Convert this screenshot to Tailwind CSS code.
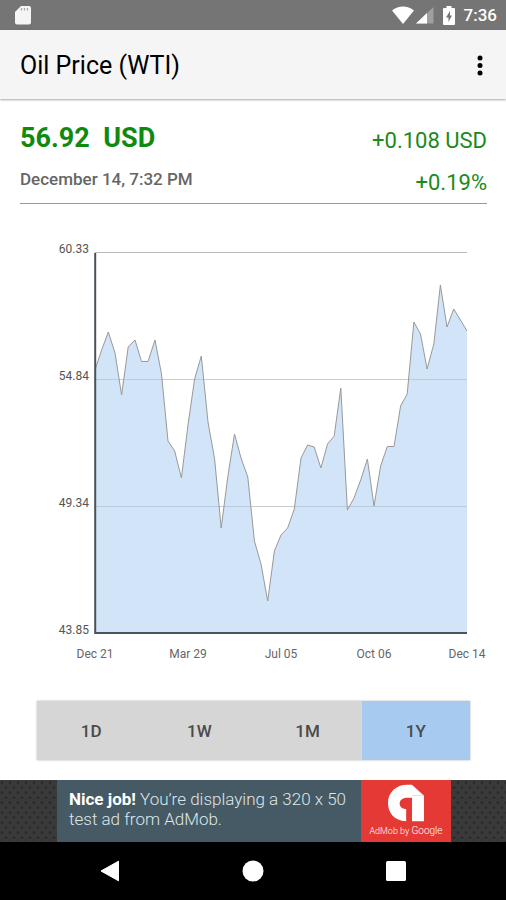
<!DOCTYPE html>
<html lang="en">
<head>
    <meta charset="UTF-8">
    <meta name="viewport" content="width=device-width, initial-scale=1.0">
    <title>Oil Price (WTI)</title>
    <script src="https://cdn.jsdelivr.net/npm/@tailwindcss/browser@4"></script>
</head>
<body class="bg-white flex flex-col min-h-screen font-[Roboto,'Liberation_Sans',sans-serif]">

    <!-- Status bar -->
    <div class="bg-[#757575] h-[30px] flex items-center justify-between pl-[15px] pr-[9px] text-white shrink-0">
        <svg class="w-4 h-5" viewBox="0 0 16 20" fill="#f5f5f5">
            <path d="M6 1h8a2 2 0 0 1 2 2v14.500a2 2 0 0 1-2 2H2a2 2 0 0 1-2-2V7z"/>
            <path d="M6.500 3v2.500M9.500 3v2.500M12.500 3v2.500" stroke="#aaa" stroke-width="1.300"/>
        </svg>
        <div class="flex items-center">
            <svg class="w-[22px] h-[18px]" viewBox="0 0 22 18" fill="#fff">
                <path d="M0 4.500C6.500-.7 15.500-.7 22 4.500L11 18z"/>
            </svg>
            <svg class="w-[18px] h-[18px] ml-[2px]" viewBox="0 0 18 18" fill="#fff">
                <path d="M0 17.500L17.500 1v16.500z" fill="#a0a0a0"/>
                <path d="M0 17.500L11 7v10.500z"/>
            </svg>
            <svg class="w-3 h-[19px] ml-[9px]" viewBox="0 0 12 19">
                <path d="M3.500 0h5v2H11a1 1 0 0 1 1 1v15a1 1 0 0 1-1 1H1a1 1 0 0 1-1-1V3a1 1 0 0 1 1-1h2.500z" fill="#fff"/>
                <path d="M7 5L3 11.500h2.500V16L9 9.500H7z" fill="#757575"/>
            </svg>
            <span class="text-[17px] leading-5 font-medium ml-[9px]">7:36</span>
        </div>
    </div>

    <!-- App bar -->
    <header class="bg-[#f5f5f5] h-[69px] flex items-center justify-between pl-5 pr-[19px] pt-[2px] shadow-[0_1px_2px_rgba(0,0,0,0.35)] shrink-0">
        <h1 class="text-[25px] leading-8 text-black">Oil Price (WTI)</h1>
        <button type="button" aria-label="More options" class="flex justify-center w-4 h-6">
            <svg class="w-4 h-6" viewBox="0 0 16 24" fill="#000">
                <circle cx="9" cy="4" r="2.500"/>
                <circle cx="9" cy="11.500" r="2.500"/>
                <circle cx="9" cy="19" r="2.500"/>
            </svg>
        </button>
    </header>

    <main class="flex-grow">
        <!-- Current price -->
        <section class="ml-5 mr-[19px] mt-[21px] pb-[3px] flex justify-between items-start border-b border-[#999]">
            <div>
                <p class="text-[27px] leading-9 font-bold text-[#0f8a0f]">56.92&nbsp; USD</p>
                <p class="text-[17px] leading-[30px] mt-2 font-medium text-[#666]">December 14, 7:32 PM</p>
            </div>
            <div class="flex flex-col gap-2 pt-1 text-right text-[22px] leading-[34px] text-[#1a8a1a]">
                <p>+0.108 USD</p>
                <p>+0.19%</p>
            </div>
        </section>

        <!-- Chart -->
        <section class="mt-[37px]">
            <div class="flex items-start pr-[39px]">
                <div class="w-[94px] h-[397px] pr-[5px] flex flex-col justify-between text-right text-xs text-[#555]">
                    <span>60.33</span>
                    <span>54.84</span>
                    <span>49.34</span>
                    <span>43.85</span>
                </div>
                <svg class="flex-1 min-w-0 h-[382px] mt-[11px]" viewBox="0 0 373 382" preserveAspectRatio="none">
                    <path d="M1 .5H373" stroke="#bbb" fill="none"/>
                    <path d="M1 127.500H373M1 254.500H373" stroke="#ccc" fill="none"/>
                    <path d="M1 118L7.600 98L14.300 80L21 101L27.600 143L34.200 95L41 88L47.500 109.500H54L61 88L67.500 122L74 189L80.700 199L87.400 226L94 173L100.600 127L107.300 104L114 170L120.600 207L127.200 276L133.900 224L140.500 182L147 206L153.800 225L160.400 289L167 312L173.700 349L180.400 299L187 283L193.600 276L200.300 257L207 206L213.600 193L220.200 195L226.900 216L233.500 192L240.200 184L246.800 136L253.400 258L260 246L266.700 228L273.400 207L280 254L286.600 214L293.300 194.500H300L306.600 154L313.200 142L319.900 70L326.500 82L333.100 117L339.800 92L346.400 33L353 75L359.700 57L366.400 68L373 79V381H1z" fill="#a6caf0" fill-opacity=".5"/>
                    <path d="M1 118L7.600 98L14.300 80L21 101L27.600 143L34.200 95L41 88L47.500 109.500H54L61 88L67.500 122L74 189L80.700 199L87.400 226L94 173L100.600 127L107.300 104L114 170L120.600 207L127.200 276L133.900 224L140.500 182L147 206L153.800 225L160.400 289L167 312L173.700 349L180.400 299L187 283L193.600 276L200.300 257L207 206L213.600 193L220.200 195L226.900 216L233.500 192L240.200 184L246.800 136L253.400 258L260 246L266.700 228L273.400 207L280 254L286.600 214L293.300 194.500H300L306.600 154L313.200 142L319.900 70L326.500 82L333.100 117L339.800 92L346.400 33L353 75L359.700 57L366.400 68L373 79" fill="none" stroke="#999"/>
                    <path d="M1.200 1V381H373" fill="none" stroke="#4a5359" stroke-width="2"/>
                </svg>
            </div>
            <div class="flex justify-between mt-2 pl-[73px] pr-[17px] text-xs text-[#666]">
                <span class="w-11 text-center">Dec 21</span>
                <span class="w-11 text-center">Mar 29</span>
                <span class="w-11 text-center">Jul 05</span>
                <span class="w-11 text-center">Oct 06</span>
                <span class="w-11 text-center">Dec 14</span>
            </div>
        </section>

        <!-- Range -->
        <div class="mt-[39px] ml-[37px] mr-9 grid grid-cols-4 h-[59px] text-[17px] font-medium text-[#4a4a4a] bg-[#d6d6d6] shadow-[0_0_2px_rgba(0,0,0,0.3)]">
            <button type="button" class="pt-[2px]">1D</button>
            <button type="button" class="pt-[2px]">1W</button>
            <button type="button" class="pt-[2px]">1M</button>
            <button type="button" class="pt-[2px] bg-[#a6caf0]">1Y</button>
        </div>
    </main>

    <!-- Ad banner -->
    <aside class="relative h-[62px] bg-[#3a3a3a] flex justify-center pl-[2px] shrink-0">
        <svg class="absolute inset-0 w-full h-full">
            <defs>
                <pattern id="mesh" width="8" height="10" patternUnits="userSpaceOnUse">
                    <circle cx="2" cy="2.500" r="1.600" fill="#2c2c2c"/>
                    <circle cx="6" cy="7.500" r="1.600" fill="#2c2c2c"/>
                </pattern>
            </defs>
            <rect width="100%" height="100%" fill="url(#mesh)"/>
        </svg>
        <a href="#" class="relative flex w-[394px] bg-[#455a64]">
            <p class="flex-1 pl-3 pt-[9px] text-[17px] leading-5 font-light text-[#dfe6ea] whitespace-nowrap"><b class="font-bold text-white">Nice job!</b> You’re displaying a 320 x 50<br>test ad from AdMob.</p>
            <div class="w-[90px] bg-[#e53935] flex flex-col items-center pt-1 text-white">
                <svg class="w-[38px] h-[38px]" viewBox="0 0 115 117" fill="#fff">
                    <path d="M58 115C20 113 2 88 2 58C2 25 28 2 60 2H76L113 36V115H76V42H62C46 42 38 50 38 60C38 70 46 77 58 77z"/>
                    <path d="M76 36H113" stroke="#ddd" stroke-width="3"/>
                </svg>
                <span class="text-[9px] leading-[18px] font-light whitespace-nowrap">AdMob by <span class="text-[10px]">Google</span></span>
            </div>
        </a>
    </aside>

    <!-- Navigation bar -->
    <nav class="bg-black h-[58px] flex items-center justify-center gap-[122px] shrink-0">
        <button type="button" aria-label="Back">
            <svg class="w-5 h-[22px]" viewBox="0 0 20 22" fill="#fff"><path d="M18.500 1.200V20.800L1 11z" stroke="#fff" stroke-linejoin="round"/></svg>
        </button>
        <button type="button" aria-label="Home">
            <svg class="w-[22px] h-[22px]" viewBox="0 0 22 22" fill="#fff"><circle cx="11" cy="11" r="10.500"/></svg>
        </button>
        <button type="button" aria-label="Recent apps">
            <svg class="w-5 h-5" viewBox="0 0 20 20" fill="#fff"><rect width="20" height="20" rx="1.500"/></svg>
        </button>
    </nav>
</body>
</html>
